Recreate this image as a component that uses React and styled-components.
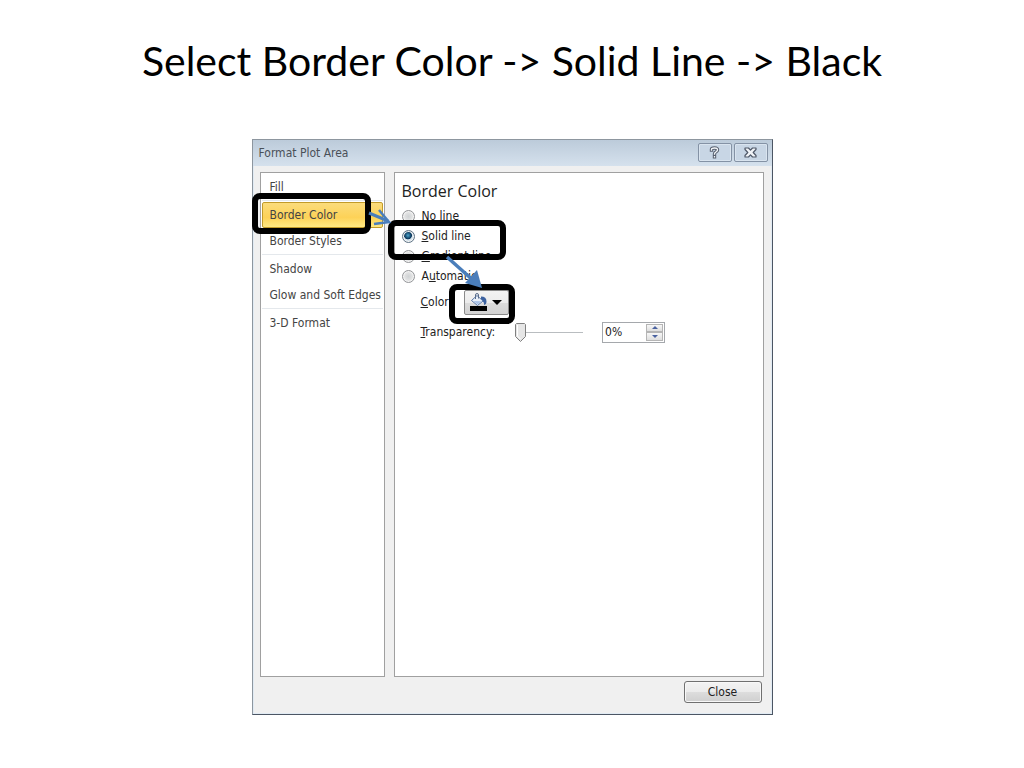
// src/App.jsx
import React, { useState } from 'react'
import styled, { createGlobalStyle } from 'styled-components'

const GlobalStyle = createGlobalStyle`
  * {
    box-sizing: border-box;
  }

  body {
    margin: 0;
    background: #fff;
  }

  button,
  input {
    font: inherit;
    color: inherit;
  }
`

const Slide = styled.main`
  min-height: 100vh;
  display: flex;
  flex-direction: column;
  align-items: center;
  padding: 35px 0 53px;
`

const Title = styled.h1`
  margin: 0 0 52px;
  font: 400 41px/52px Lato, Carlito, sans-serif;
  color: #000;
  text-align: center;
`

const Dialog = styled.section`
  position: relative;
  flex: 1;
  width: 100%;
  max-width: 521px;
  display: flex;
  flex-direction: column;
  padding: 0 8px 11px 7px;
  background: #f0f0f0;
  border: 1px solid #8d969f;
  border-right-color: #4c5664;
  border-bottom-color: #4c5664;
  box-shadow: inset 0 0 0 1px #e1ebf4;
  font: 12px/16px 'DejaVu Sans Condensed', 'DejaVu Sans', sans-serif;
  color: #222;
`

const TitleBar = styled.header`
  display: flex;
  align-items: center;
  gap: 2px;
  height: 26px;
  margin: 0 -8px 6px -7px;
  padding: 0 4px 1px 6px;
  background: linear-gradient(#bccbda, #d5e1ed);
  color: #4a5058;
`

const DialogTitle = styled.h2`
  flex: 1;
  margin: 0;
  font-size: 12px;
  font-weight: 400;
`

const CaptionButton = styled.button`
  display: flex;
  align-items: center;
  justify-content: center;
  width: 34px;
  height: 19px;
  padding: 0;
  border: 1px solid #8492a5;
  border-radius: 2px;
  background: #c8d6e5;
  box-shadow: inset 0 0 0 1px #d9e4ef;
`

const Panels = styled.div`
  flex: 1;
  display: flex;
  gap: 9px;
`

const Sidebar = styled.nav`
  width: 125px;
  padding: 1px;
  background: #fff;
  border: 1px solid #a0a0a0;
`

const NavItem = styled.button`
  display: block;
  width: 100%;
  height: 26px;
  padding: 0 0 0 7px;
  border: 1px solid ${({ $active }) => ($active ? '#c29b29' : 'transparent')};
  border-radius: 2px;
  background: ${({ $active }) =>
    $active ? 'linear-gradient(#fbdc7c, #fdd257 60%, #ffe983)' : 'none'};
  color: #444;
  text-align: left;
  white-space: nowrap;
`

const Separator = styled.hr`
  height: 2px;
  margin: 0;
  border: 0;
  border-top: 1px solid #e4e8ec;
`

const Content = styled.div`
  flex: 1;
  padding: 6px 6px 6px 7px;
  background: #fff;
  border: 1px solid #a0a0a0;
`

const Heading = styled.h3`
  margin: 0 0 5px;
  font: 400 16px/24px 'Open Sans', 'Noto Sans', sans-serif;
  color: #222;
`

const RadioGroup = styled.div`
  display: flex;
  flex-direction: column;
  gap: 4px;
`

const RadioLabel = styled.label`
  display: flex;
  align-items: center;
  gap: 7px;
`

const Radio = styled.input`
  appearance: none;
  width: 13px;
  height: 13px;
  margin: 0;
  border: 1px solid #939598;
  border-radius: 50%;
  background: radial-gradient(circle, #cfd2d4, #e9e9e9 70%);
  box-shadow: inset 0 0 0 1px #f4f4f4;

  &:checked {
    border-color: #5e7284;
    background: radial-gradient(circle at 45% 40%, #4ea3c8 0, #12486f 32%, #0e3658 40%, #d3e2ec 48%);
  }
`

const Field = styled.div`
  display: flex;
  align-items: center;
  height: 24px;
  margin-top: 6px;
  padding-left: 19px;
`

const ColorButton = styled.button`
  display: flex;
  align-items: center;
  justify-content: space-between;
  width: 45px;
  height: 25px;
  margin-left: 12px;
  padding: 0 6px 0 4px;
  border: 1px solid #8a8a8a;
  border-radius: 2px;
  background: linear-gradient(#f3f3f3, #ececec 50%, #dcdcdc 51%, #d2d2d2);
`

const Slider = styled.input`
  appearance: none;
  width: 68px;
  height: 21px;
  margin: 0 0 0 20px;
  background: linear-gradient(#b9bdc0, #b9bdc0) center / 100% 1px no-repeat;

  &::-webkit-slider-thumb {
    appearance: none;
    width: 11px;
    height: 19px;
    background: url("data:image/svg+xml,%3Csvg xmlns='http://www.w3.org/2000/svg' width='11' height='19'%3E%3Cpath d='M1.5 .5h8l1 1v12l-5 5-5-5v-12z' fill='%23e6e6e6' stroke='%23808080'/%3E%3Cpath d='M2.5 2v11l3 3' fill='none' stroke='%23fff'/%3E%3C/svg%3E");
  }
`

const Spinner = styled.div`
  display: flex;
  width: 63px;
  height: 21px;
  margin-left: 19px;
  padding: 1px;
  border: 1px solid #a5a8ac;
  background: #fff;
`

const SpinnerInput = styled.input`
  flex: 1;
  min-width: 0;
  padding: 0 0 0 1px;
  border: 0;
  outline: 0;
  background: none;
`

const Steps = styled.div`
  display: flex;
  flex-direction: column;
`

const StepButton = styled.button`
  flex: 1;
  display: flex;
  align-items: center;
  justify-content: center;
  width: 17px;
  padding: 0;
  border: 1px solid #b5b5b5;
  background: linear-gradient(#f7f7f7, #dedede);
`

const Footer = styled.footer`
  display: flex;
  justify-content: flex-end;
  padding: 4px 2px 0 0;
`

const CloseButton = styled.button`
  width: 78px;
  height: 22px;
  padding: 0;
  border: 1px solid #707070;
  border-radius: 3px;
  background: linear-gradient(#f3f3f3, #ebebeb 50%, #dddddd 51%, #cfcfcf);
  box-shadow: inset 0 0 0 1px #f8f8f8;
`

const Callouts = styled.svg`
  position: absolute;
  top: -1px;
  left: -1px;
  overflow: visible;
  pointer-events: none;
`

const pages = ['Fill', 'Border Color', 'Border Styles', 'Shadow', 'Glow and Soft Edges', '3-D Format']
const separatorAfter = ['Fill', 'Border Styles', 'Glow and Soft Edges']

const lineTypes = [
  { id: 'none', label: <><u>N</u>o line</> },
  { id: 'solid', label: <><u>S</u>olid line</> },
  { id: 'gradient', label: <><u>G</u>radient line</> },
  { id: 'auto', label: <>A<u>u</u>tomatic</> },
]

const HelpIcon = () => (
  <svg width="11" height="13" viewBox="0 0 11 13" fill="none" strokeLinecap="square">
    <path d="M2.5 4V3.2Q2.5 2 5.5 2t3 1.8q0 1.2-1.4 2Q5.5 6.6 5.5 8M5.5 10.7v.1" stroke="#596271" strokeWidth="3.4" />
    <path d="M2.5 4V3.2Q2.5 2 5.5 2t3 1.8q0 1.2-1.4 2Q5.5 6.6 5.5 8M5.5 10.7v.1" stroke="#f4f7fa" strokeWidth="1.3" />
  </svg>
)

const CrossIcon = () => (
  <svg width="13" height="11" viewBox="0 0 13 11">
    <path
      d="M1 1h3.5l2 2.2L8.500 1H12v1.500L9.200 5.500 12 8.500V10H8.500l-2-2.200L4.500 10H1V8.500l2.800-3L1 2.500z"
      fill="#f1f4f8"
      stroke="#4f5868"
      strokeWidth="1.2"
      strokeLinejoin="round"
    />
  </svg>
)

const BucketIcon = () => (
  <svg width="19" height="18" viewBox="0 0 19 18">
    <path d="M12 3.5q5.500 0 5.500 5 0 3-2.500 3.500 .5-3-3-5.500z" fill="#3c62a0" />
    <path d="M8 2.500l6 5.500-5.500 4.500-6-5z" fill="#e9f0fa" stroke="#5877a8" strokeLinejoin="round" />
    <path d="M4.500 8l8 .2-4 3.300z" fill="#a9c3e8" />
    <path d="M6.500 6V2q0-1.500 1.500-1.500T9.500 2v3.500" fill="none" stroke="#5a6c8a" />
    <path d="M1 13h17v5H1z" fill="#000" />
  </svg>
)

const Triangle = ({ size, color, up }) => (
  <svg width={size} height={size / 2} viewBox="0 0 8 4">
    <path d={up ? 'M4 0l4 4H0z' : 'M0 0h8L4 4z'} fill={color} />
  </svg>
)

export default function App() {
  const [page, setPage] = useState('Border Color')
  const [line, setLine] = useState('solid')
  const [transparency, setTransparency] = useState(0)

  const changeTransparency = (value) => {
    setTransparency(Math.min(100, Math.max(0, Number(value) || 0)))
  }

  return (
    <>
      <GlobalStyle />
      <Slide>
        <Title>Select Border Color -&gt; Solid Line -&gt; Black</Title>

        <Dialog aria-labelledby="dialog-title">
          <TitleBar>
            <DialogTitle id="dialog-title">Format Plot Area</DialogTitle>
            <CaptionButton aria-label="Help"><HelpIcon /></CaptionButton>
            <CaptionButton aria-label="Close window"><CrossIcon /></CaptionButton>
          </TitleBar>

          <Panels>
            <Sidebar>
              {pages.map((name) => (
                <React.Fragment key={name}>
                  <NavItem $active={page === name} onClick={() => setPage(name)}>
                    {name}
                  </NavItem>
                  {separatorAfter.includes(name) && <Separator />}
                </React.Fragment>
              ))}
            </Sidebar>

            <Content>
              <Heading>Border Color</Heading>
              <RadioGroup role="radiogroup" aria-label="Border Color">
                {lineTypes.map(({ id, label }) => (
                  <RadioLabel key={id} htmlFor={id}>
                    <Radio
                      id={id}
                      type="radio"
                      name="line"
                      checked={line === id}
                      onChange={() => setLine(id)}
                    />
                    <span>{label}</span>
                  </RadioLabel>
                ))}
              </RadioGroup>

              <Field>
                <label htmlFor="color"><u>C</u>olor:</label>
                <ColorButton id="color">
                  <BucketIcon />
                  <Triangle size={10} color="#000" />
                </ColorButton>
              </Field>

              <Field>
                <label htmlFor="transparency"><u>T</u>ransparency:</label>
                <Slider
                  id="transparency"
                  type="range"
                  value={transparency}
                  onChange={(e) => changeTransparency(e.target.value)}
                />
                <Spinner>
                  <SpinnerInput
                    aria-label="Transparency percent"
                    value={`${transparency}%`}
                    onChange={(e) => changeTransparency(parseInt(e.target.value, 10))}
                  />
                  <Steps>
                    <StepButton aria-label="Increase" onClick={() => changeTransparency(transparency + 1)}>
                      <Triangle size={6} color="#4a62a0" up />
                    </StepButton>
                    <StepButton aria-label="Decrease" onClick={() => changeTransparency(transparency - 1)}>
                      <Triangle size={6} color="#4a62a0" />
                    </StepButton>
                  </Steps>
                </Spinner>
              </Field>
            </Content>
          </Panels>

          <Footer>
            <CloseButton>Close</CloseButton>
          </Footer>

          <Callouts width="521" height="576" viewBox="0 0 521 576" fill="none" aria-hidden="true">
            <g stroke="#000" strokeWidth="6">
              <rect x="3" y="57" width="113" height="35" rx="5" />
              <rect x="139" y="84" width="112" height="34" rx="5" />
              <rect x="200" y="148" width="60" height="34" rx="5" />
            </g>
            <g stroke="#4a7ebb" strokeWidth="3">
              <path d="M117 74l19 8" />
              <path d="M127 71l10 12-15 2" strokeWidth="2.500" />
              <path d="M195 118l28 25" strokeWidth="3.500" />
            </g>
            <path d="M230 149l-17-5 12-13z" fill="#4a7ebb" />
          </Callouts>
        </Dialog>
      </Slide>
    </>
  )
}
